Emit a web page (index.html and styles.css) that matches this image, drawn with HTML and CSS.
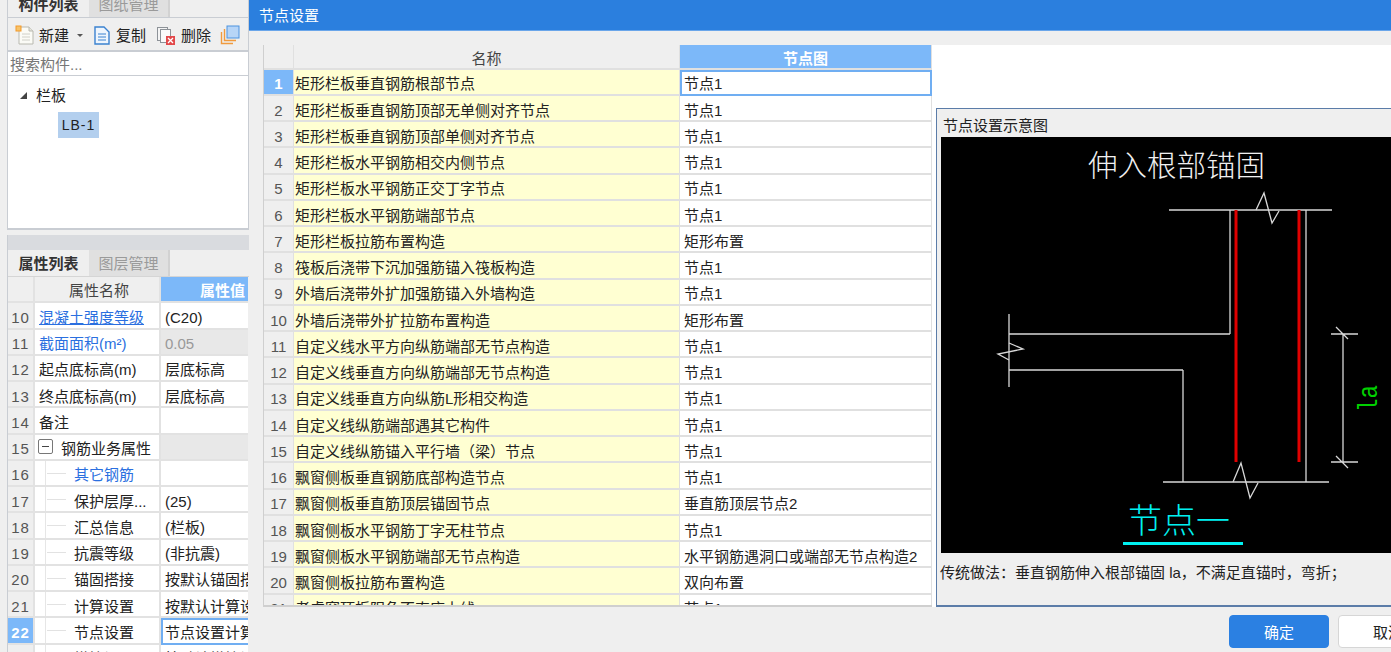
FILE: index.html
```html
<!DOCTYPE html>
<html lang="zh-CN">
<head>
<meta charset="utf-8">
<title>节点设置</title>
<link rel="stylesheet" href="styles.css">
</head>
<body>
<div class="app">
  <aside class="side">
    <section class="panel-top">
      <div class="tabs tabs-top">
        <div class="tab active">构件列表</div>
        <div class="tab">图纸管理</div>
      </div>
      <div class="toolbar">
        <span class="tool">
          <svg class="ico" viewBox="0 0 20 20"><path d="M4 2h10l4 4v13H4z" fill="#fbfbf6" stroke="#b9b9b0"/><path d="M14 2v4h4" fill="#e6e6de" stroke="#b9b9b0"/><path d="M7 9h8M7 12h8M7 15h8" stroke="#d0d0c8"/><rect x="1" y="1" width="5" height="5" fill="#f7c36a" stroke="#f39a2b"/></svg>
          新建<i class="caret"></i>
        </span>
        <span class="tool">
          <svg class="ico" viewBox="0 0 20 20"><path d="M3 2h9l5 5v12H3z" fill="#eef5fd" stroke="#3b82d0" stroke-width="1.4"/><path d="M6 9h8M6 12h8M6 15h8" stroke="#3b82d0"/></svg>
          复制
        </span>
        <span class="tool tool-del">
          <svg class="ico" viewBox="0 0 20 20"><rect x="1.500" y="2.500" width="10" height="13" fill="#f4f4f4" stroke="#8d9298"/><rect x="4.500" y="4.500" width="10" height="13" fill="#fafafa" stroke="#8d9298"/><rect x="10" y="11" width="9" height="9" fill="#e2484a"/><path d="M12 13l5 5M17 13l-5 5" stroke="#fff" stroke-width="1.300"/></svg>
          删除
        </span>
        <svg class="ico" viewBox="0 0 20 20"><path d="M1.500 7v11.500H13" fill="none" stroke="#f09a3e" stroke-width="1.400"/><path d="M4.500 4v11.500H16" fill="none" stroke="#f09a3e" stroke-width="1.400"/><rect x="7" y="1" width="12" height="12" fill="#b7d5f7" stroke="#4d93e0"/></svg>
      </div>
      <div class="search">搜索构件...</div>
      <div class="tree">
        <div class="tree-root"><i class="tree-arrow"></i>栏板</div>
        <div class="tree-item">LB-1</div>
      </div>
    </section>
    <section class="panel-bottom">
      <div class="grip"></div>
      <div class="tabs tabs-bottom">
        <div class="tab active">属性列表</div>
        <div class="tab">图层管理</div>
      </div>
      <div class="props">
        <div class="prop head"><div class="n"></div><div class="k center">属性名称</div><div class="v hot">属性值</div></div>
        <div class="prop"><div class="n">10</div><div class="k link under">混凝土强度等级</div><div class="v">(C20)</div></div>
        <div class="prop"><div class="n">11</div><div class="k link">截面面积(m²)</div><div class="v off">0.05</div></div>
        <div class="prop"><div class="n">12</div><div class="k">起点底标高(m)</div><div class="v">层底标高</div></div>
        <div class="prop"><div class="n">13</div><div class="k">终点底标高(m)</div><div class="v">层底标高</div></div>
        <div class="prop"><div class="n">14</div><div class="k">备注</div><div class="v"></div></div>
        <div class="prop"><div class="n">15</div><div class="k group"><i class="minus"></i>钢筋业务属性</div><div class="v shade"></div></div>
        <div class="prop"><div class="n">16</div><div class="k sub link">其它钢筋</div><div class="v"></div></div>
        <div class="prop"><div class="n">17</div><div class="k sub">保护层厚...</div><div class="v">(25)</div></div>
        <div class="prop"><div class="n">18</div><div class="k sub">汇总信息</div><div class="v">(栏板)</div></div>
        <div class="prop"><div class="n">19</div><div class="k sub">抗震等级</div><div class="v">(非抗震)</div></div>
        <div class="prop"><div class="n">20</div><div class="k sub">锚固搭接</div><div class="v">按默认锚固搭接计算</div></div>
        <div class="prop"><div class="n">21</div><div class="k sub">计算设置</div><div class="v">按默认计算设置计算</div></div>
        <div class="prop"><div class="n hot">22</div><div class="k sub">节点设置</div><div class="v edit">节点设置计算</div></div>
        <div class="prop"><div class="n">23</div><div class="k sub">搭接设置</div><div class="v">按默认搭接设置计算</div></div>
      </div>
    </section>
  </aside>

  <main class="dialog">
    <header class="title">节点设置</header>
    <div class="content">
      <div class="grid">
        <div class="row head"><div class="n"></div><div class="name center">名称</div><div class="val hot center">节点图</div></div>
        <div class="row"><div class="n hot">1</div><div class="name">矩形栏板垂直钢筋根部节点</div><div class="val edit">节点1</div></div>
        <div class="row"><div class="n">2</div><div class="name">矩形栏板垂直钢筋顶部无单侧对齐节点</div><div class="val">节点1</div></div>
        <div class="row"><div class="n">3</div><div class="name">矩形栏板垂直钢筋顶部单侧对齐节点</div><div class="val">节点1</div></div>
        <div class="row"><div class="n">4</div><div class="name">矩形栏板水平钢筋相交内侧节点</div><div class="val">节点1</div></div>
        <div class="row"><div class="n">5</div><div class="name">矩形栏板水平钢筋正交丁字节点</div><div class="val">节点1</div></div>
        <div class="row"><div class="n">6</div><div class="name">矩形栏板水平钢筋端部节点</div><div class="val">节点1</div></div>
        <div class="row"><div class="n">7</div><div class="name">矩形栏板拉筋布置构造</div><div class="val">矩形布置</div></div>
        <div class="row"><div class="n">8</div><div class="name">筏板后浇带下沉加强筋锚入筏板构造</div><div class="val">节点1</div></div>
        <div class="row"><div class="n">9</div><div class="name">外墙后浇带外扩加强筋锚入外墙构造</div><div class="val">节点1</div></div>
        <div class="row"><div class="n">10</div><div class="name">外墙后浇带外扩拉筋布置构造</div><div class="val">矩形布置</div></div>
        <div class="row"><div class="n">11</div><div class="name">自定义线水平方向纵筋端部无节点构造</div><div class="val">节点1</div></div>
        <div class="row"><div class="n">12</div><div class="name">自定义线垂直方向纵筋端部无节点构造</div><div class="val">节点1</div></div>
        <div class="row"><div class="n">13</div><div class="name">自定义线垂直方向纵筋L形相交构造</div><div class="val">节点1</div></div>
        <div class="row"><div class="n">14</div><div class="name">自定义线纵筋端部遇其它构件</div><div class="val">节点1</div></div>
        <div class="row"><div class="n">15</div><div class="name">自定义线纵筋锚入平行墙（梁）节点</div><div class="val">节点1</div></div>
        <div class="row"><div class="n">16</div><div class="name">飘窗侧板垂直钢筋底部构造节点</div><div class="val">节点1</div></div>
        <div class="row"><div class="n">17</div><div class="name">飘窗侧板垂直筋顶层锚固节点</div><div class="val">垂直筋顶层节点2</div></div>
        <div class="row"><div class="n">18</div><div class="name">飘窗侧板水平钢筋丁字无柱节点</div><div class="val">节点1</div></div>
        <div class="row"><div class="n">19</div><div class="name">飘窗侧板水平钢筋端部无节点构造</div><div class="val">水平钢筋遇洞口或端部无节点构造2</div></div>
        <div class="row"><div class="n">20</div><div class="name">飘窗侧板拉筋布置构造</div><div class="val">双向布置</div></div>
        <div class="row"><div class="n">21</div><div class="name">老虎窗顶板阳角不直座上线</div><div class="val">节点1</div></div>
      </div>
      <section class="preview">
        <div class="preview-title">节点设置示意图</div>
        <svg class="sketch" viewBox="941 137 450 416">
          <g class="ln">
            <path d="M1169 210H1332M1230 210V334M1306 210V482M1009 334H1230M1009 314V387M1009 370H1183M1183 370V482M1163 482H1329"/>
            <path d="M1256 210L1264 193L1272 223L1279 211M1233 482L1241 463L1250 498L1258 483M1009 343L1023 349L998 354L1009 360"/>
            <path d="M1343 334V462M1331 334H1358M1331 462H1358M1336 327L1348 339M1336 456L1348 468"/>
          </g>
          <path class="rebar" d="M1236 210V462M1299 210V462"/>
          <text class="cad-title" x="1088" y="176">伸入根部锚固</text>
          <text class="cad-node" x="1128" y="533">节点一</text>
          <rect class="cad-rule" x="1123" y="542" width="120" height="3"/>
          <text class="cad-dim" transform="translate(1377 412) rotate(-90)" textLength="27" lengthAdjust="spacingAndGlyphs">la</text>
        </svg>
        <p class="desc">传统做法：垂直钢筋伸入根部锚固 la，不满足直锚时，弯折；</p>
      </section>
    </div>
    <footer class="actions">
      <button class="btn primary">确定</button>
      <button class="btn">取消</button>
    </footer>
  </main>
</div>
</body>
</html>
```
FILE: styles.css
```css
* { box-sizing: border-box; }
html, body { margin: 0; height: 100%; overflow: hidden; }
body {
  font: 15px/1 "Liberation Sans", "Noto Sans CJK SC", sans-serif;
  color: #222;
  background: #efefef;
}
.app { display: flex; height: 652px; overflow: hidden; }

/* left column */
.side { width: 249px; flex: none; padding-left: 7px; display: flex; flex-direction: column; overflow: hidden; }
.panel-top { height: 230px; flex: none; margin-top: 0; border-left: 1px solid #c9cdd3; border-right: 1px solid #c9cdd3; border-bottom: 2px solid #c9cdd3; display: flex; flex-direction: column; overflow: hidden; }
.tabs { display: flex; flex: none; }
.tabs-top { height: 18px; align-items: flex-end; border-bottom: 1px solid #c9cdd3; }
.tabs-top .tab { height: 26px; flex: none; }
.tabs-bottom { height: 27px; border-bottom: 1px solid #d5d5d5; }
.tab { width: 81px; display: flex; align-items: center; justify-content: center; background: #e0e0e0; color: #9a9a9a; border-right: 2px solid #d2d2d2; }
.tab.active { background: #efefef; color: #333; font-weight: 700; border-right: 0; }
.toolbar { height: 34px; flex: none; display: flex; align-items: center; padding: 2px 0 0 7px; gap: 9px; background: #efefef; border-bottom: 2px solid #c9cdd3; white-space: nowrap; }
.tool { display: flex; align-items: center; gap: 4px; }
.tool-del { margin-left: 1px; gap: 5px; }
.ico { width: 20px; height: 20px; flex: none; }
.caret { width: 0; height: 0; margin-left: 4px; border: 3px solid transparent; border-top: 3px solid #555; border-bottom: 0; }
.search { height: 24px; flex: none; display: flex; align-items: center; padding: 2px 0 0 2px; background: #fff; color: #777; border-bottom: 1px solid #c9cdd3; }
.tree { flex: 1; background: #fff; padding-top: 11px; }
.tree-root { display: flex; align-items: center; height: 16px; padding-left: 12px; color: #222; }
.tree-arrow { width: 0; height: 0; margin-right: 9px; border-left: 7px solid transparent; border-bottom: 7px solid #444; }
.tree-item { width: 41px; height: 26px; margin: 9px 0 0 50px; background: #b3cfee; display: flex; align-items: center; justify-content: center; font-size: 14px; letter-spacing: 1px; }

.panel-bottom { flex: 1; margin-top: 5px; min-height: 0; border-left: 1px solid #c9cdd3; display: flex; flex-direction: column; overflow: hidden; }
.grip { height: 15px; flex: none; background: #d9dbdf; }
.props { flex: 1; overflow: hidden; }
.prop { display: grid; grid-template-columns: 27px 126px 87px; height: 26.25px; }
.prop > div { display: flex; align-items: center; border-bottom: 2px solid #e2e2e2; border-right: 2px solid #e2e2e2; white-space: nowrap; overflow: hidden; background: #fff; padding: 4px 0 0 4px; }
.prop > .n { background: #efefef; color: #555; justify-content: center; padding: 4px 0 0; letter-spacing: 1px; }
.prop > .center { justify-content: center; background: #efefef; color: #444; padding-top: 2px; }
.prop > .hot { background: #7cb8f9; color: #fff; font-weight: 700; justify-content: center; }
.prop > .v.hot { justify-content: flex-start; padding: 2px 0 0 39px; }
.prop > .v { border-right: 0; }
.prop .k.link { color: #2a6fe0; }
.prop .under { text-decoration: underline; }
.prop .off { background: #e8e8e8; color: #999; }
.prop .shade { background: #e8e8e8; }
.prop > .group { padding-left: 3px; }
.minus { width: 15px; height: 15px; margin: -4px 8px 0 0; border: 1px solid #777; border-radius: 2px; flex: none; position: relative; background: #fff; }
.minus::after { content: ""; position: absolute; left: 3px; right: 3px; top: 6px; height: 1px; background: #444; }
.prop > .sub { padding-left: 39px; position: relative; }
.sub::before { content: ""; position: absolute; left: 10px; top: 0; bottom: -2px; border-left: 1px solid #e6e6e6; }
.sub::after { content: ""; position: absolute; left: 12px; width: 19px; top: 12px; border-top: 1px solid #e2e2e2; }
.prop > .edit { border: 2px solid #70aef2; padding-left: 2px; padding-top: 2px; border-right: 0; }

/* dialog */
.dialog { flex: 1; min-width: 0; display: flex; flex-direction: column; background: #efefef; overflow: hidden; }
.title { height: 31px; flex: none; display: flex; align-items: center; padding-left: 10px; background: #2b7fde; color: #fff; border-bottom: 1px solid #6aa6ea; }
.content { height: 562px; flex: none; margin: 14px 0 0 14px; display: flex; background: #fff; }
.grid { width: 669px; flex: none; overflow: hidden; border-left: 1px solid #cfcfcf; border-bottom: 2px solid #cfcfcf; }
.row { display: grid; grid-template-columns: 30px 386px 252px; height: 26.25px; }
.row.head { height: 24.7px; }
.row > div { display: flex; align-items: center; padding: 4px 0 0 4px; border-bottom: 2px solid #e0e0e0; border-right: 1px solid #e0e0e0; white-space: nowrap; overflow: hidden; }
.row > .n { background: #efefef; color: #555; justify-content: center; padding: 4px 0 0; }
.row > .name { background: #ffffd2; padding-left: 1px; }
.row > .val { background: #fff; }
.row > .center { justify-content: center; background: #efefef; color: #444; padding: 4px 0 0; }
.row > .hot { background: #7cb8f9; color: #fff; font-weight: 700; }
.row > .center.hot { background: #7cb8f9; color: #fff; }
.row > .edit { border: 2px solid #70aef2; padding-left: 2px; padding-top: 2px; }

.preview { flex: 1; min-width: 0; margin: 63px 0 0 4px; background: #efefef; border: 1px solid #5b7ca8; border-right: 0; border-bottom-width: 2px; display: flex; flex-direction: column; padding-left: 4px; }
.preview-title { height: 28px; flex: none; display: flex; align-items: center; padding: 4px 0 0 2px; }
.sketch { display: block; width: 450px; height: 416px; flex: none; background: #000; }
.ln { fill: none; stroke: #d8d8d8; stroke-width: 1.300; }
.rebar { fill: none; stroke: #e00000; stroke-width: 3; }
.cad-title { font-size: 29.500px; fill: #f0f0f0; font-weight: 300; }
.cad-node { font-size: 34px; fill: #00f0f0; font-weight: 300; }
.cad-rule { fill: #00f0f0; }
.cad-dim { font: 27px "Liberation Mono", monospace; fill: #00d000; }
.desc { margin: 12px 0 0 -1px; white-space: nowrap; color: #222; }

.actions { flex: 1; display: flex; gap: 9px; padding: 8px 0 0 980px; align-items: flex-start; }
.btn { width: 100px; height: 33px; flex: none; border: 1px solid #d6d6d6; border-radius: 4px; background: #fff; color: #222; font: inherit; padding: 2px 0 0; }
.btn.primary { background: #2b80e2; border-color: #2b80e2; color: #fff; }
```
